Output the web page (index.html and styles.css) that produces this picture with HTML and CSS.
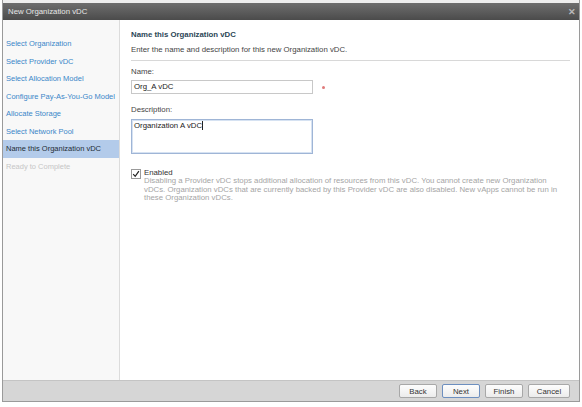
FILE: index.html
```html
<!DOCTYPE html>
<html>
<head>
<meta charset="utf-8">
<link rel="stylesheet" href="styles.css">
</head>
<body>
<div class="dialog">
  <div class="titlebar">
    <span class="title">New Organization vDC</span>
    <span class="close">&#x2715;</span>
  </div>
  <div class="body">
    <nav class="nav">
      <div class="nav-item">Select Organization</div>
      <div class="nav-item">Select Provider vDC</div>
      <div class="nav-item">Select Allocation Model</div>
      <div class="nav-item">Configure Pay-As-You-Go Model</div>
      <div class="nav-item">Allocate Storage</div>
      <div class="nav-item">Select Network Pool</div>
      <div class="nav-item active">Name this Organization vDC</div>
      <div class="nav-item disabled">Ready to Complete</div>
    </nav>
    <main class="main">
      <h1 class="heading">Name this Organization vDC</h1>
      <p class="subtitle">Enter the name and description for this new Organization vDC.</p>
      <div class="sep"></div>
      <label class="label">Name:</label>
      <div class="field-row">
        <div class="input">Org_A vDC</div>
        <span class="req"></span>
      </div>
      <label class="label label-desc">Description:</label>
      <div class="textarea">Organization A vDC<span class="caret"></span></div>
      <div class="check-row">
        <span class="checkbox"><svg viewBox="0 0 10 10" width="8" height="8"><path d="M1.5 5.2 L4 8 L8.6 1.4" fill="none" stroke="#222" stroke-width="1.5"/></svg></span>
        <div class="check-text">
          <div class="check-label">Enabled</div>
          <div class="check-help">Disabling a Provider vDC stops additional allocation of resources from this vDC. You cannot create new Organization vDCs. Organization vDCs that are currently backed by this Provider vDC are also disabled. New vApps cannot be run in these Organization vDCs.</div>
        </div>
      </div>
    </main>
  </div>
  <div class="footer">
    <button class="btn">Back</button>
    <button class="btn primary">Next</button>
    <button class="btn">Finish</button>
    <button class="btn">Cancel</button>
  </div>
</div>
</body>
</html>
```
FILE: styles.css
```css
html, body {
  margin: 0;
  padding: 0;
  background: #ffffff;
}
body {
  font-family: "Liberation Sans", Arial, sans-serif;
  font-size: 7.8px;
  color: #333;
}
.dialog {
  margin: 0 2px;
  width: 578px;
  height: 402px;
  border: 1px solid #9a9a9a;
  border-top: none;
  background: #eeeeee;
  padding-top: 3px;
  display: flex;
  flex-direction: column;
  box-sizing: border-box;
}
.titlebar {
  height: 17px;
  background: linear-gradient(#6e6e6e, #4b4b4b);
  display: flex;
  align-items: center;
  justify-content: space-between;
  padding: 0 3px 0 5px;
  color: #e6e6e6;
}
.title {
  font-size: 7.8px;
}
.close {
  color: #b8b8b8;
  font-size: 9px;
  font-weight: bold;
}
.body {
  flex: 1;
  display: flex;
  background: #fff;
}
.nav {
  width: 116px;
  background: #f8f8f8;
  border-right: 1px solid #dcdcdc;
  padding-top: 15px;
}
.nav-item {
  height: 17.5px;
  line-height: 17.5px;
  padding-left: 3px;
  font-size: 7.5px;
  color: #3a87c8;
  white-space: nowrap;
}
.nav-item.active {
  background: #b3cbea;
  color: #1e2b36;
}
.nav-item.disabled {
  color: #c6c6c6;
}
.main {
  flex: 1;
  padding: 10px 9px 0 11px;
}
.heading {
  margin: 0;
  font-size: 7.8px;
  font-weight: bold;
  color: #2b4656;
  line-height: 10px;
}
.subtitle {
  margin: 5px 0 0;
  line-height: 10px;
  color: #444;
}
.sep {
  margin-top: 5px;
  border-top: 1px solid #d8d8d8;
}
.label {
  display: block;
  margin-top: 6px;
  line-height: 10px;
  color: #444;
}
.label-desc {
  margin-top: 11px;
}
.field-row {
  display: flex;
  align-items: center;
  margin-top: 3px;
}
.input {
  width: 178px;
  height: 12px;
  border: 1px solid #c8c8c8;
  line-height: 12px;
  padding-left: 2px;
  color: #222;
  background: #fff;
}
.req {
  width: 3px;
  height: 3px;
  border-radius: 50%;
  background: #e07a7a;
  margin-left: 9px;
  margin-top: 1px;
}
.textarea {
  margin-top: 4px;
  border: 1px solid #9fb5d6;
  box-shadow: inset 0 0 0 1px #d6e2f2;
  padding: 1px 2px;
  box-sizing: border-box;
  width: 182px;
  height: 35px;
  color: #222;
  line-height: 10px;
}
.caret {
  display: inline-block;
  width: 1px;
  height: 9px;
  background: #222;
  vertical-align: -2px;
}
.check-row {
  display: flex;
  margin-top: 14px;
}
.checkbox {
  width: 8px;
  height: 8px;
  border: 1px solid #9a9a9a;
  background: #fff;
  display: flex;
  align-items: center;
  justify-content: center;
  margin-top: 1px;
}
.check-text {
  margin-left: 3px;
  width: 418px;
}
.check-label {
  line-height: 9px;
  color: #333;
}
.check-help {
  color: #a5a5a5;
  line-height: 8.6px;
}
.footer {
  height: 20px;
  background: #d6d6d6;
  border-top: 1px solid #c4c4c4;
  display: flex;
  align-items: center;
  justify-content: flex-end;
  gap: 5px;
  padding-right: 9px;
}
.btn {
  font-family: "Liberation Sans", Arial, sans-serif;
  font-size: 7.8px;
  height: 14px;
  width: 38px;
  padding: 0;
  border: 1px solid #a8a8a8;
  border-radius: 2px;
  background: linear-gradient(#fdfdfd, #ececec);
  color: #333;
}
.btn.primary {
  border-color: #6d8fbf;
}
.btn:last-child {
  width: 42px;
}
```
